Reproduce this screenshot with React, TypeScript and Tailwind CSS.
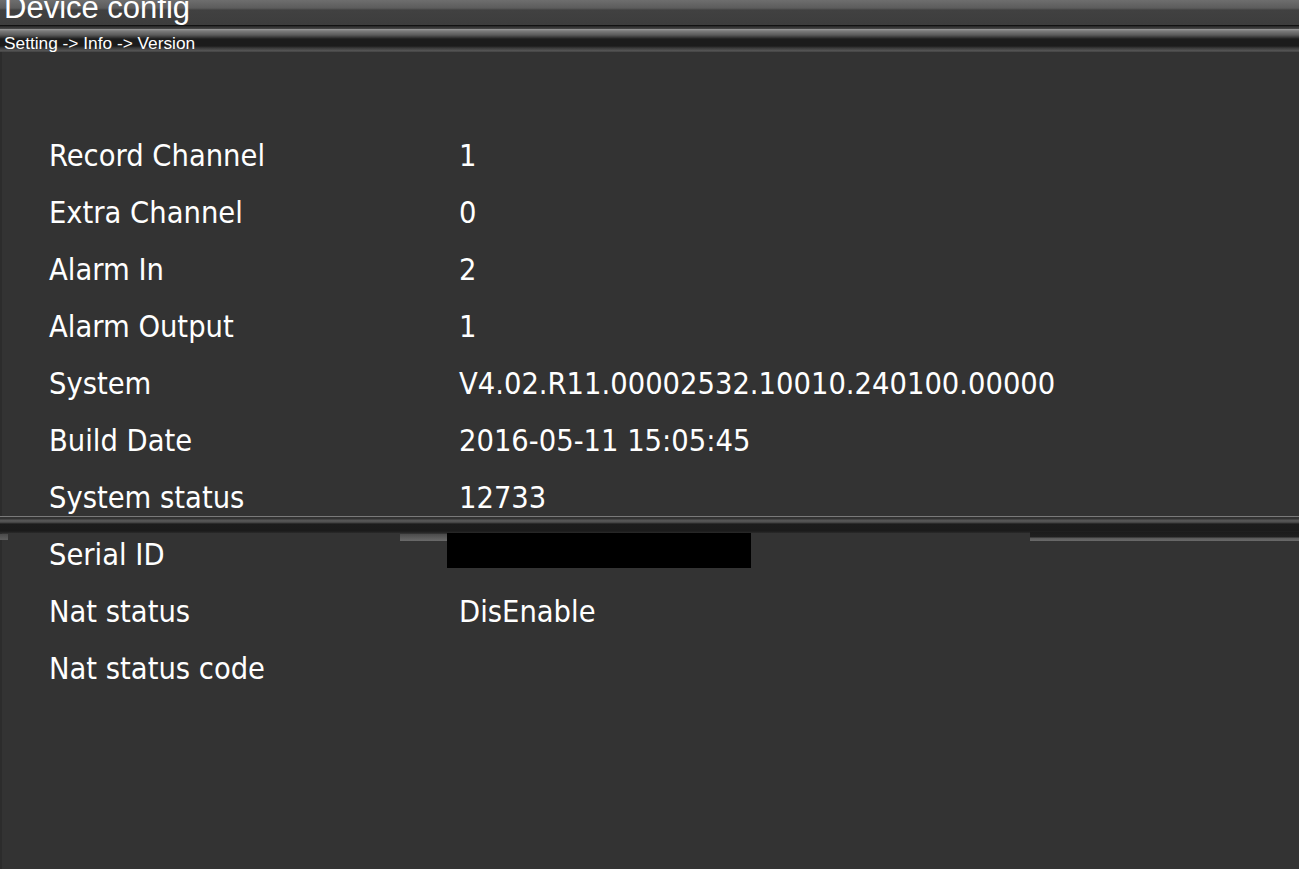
const rows: [string, string][] = [
  ['Record Channel', '1'],
  ['Extra Channel', '0'],
  ['Alarm In', '2'],
  ['Alarm Output', '1'],
  ['System', 'V4.02.R11.00002532.10010.240100.00000'],
  ['Build Date', '2016-05-11 15:05:45'],
  ['System status', '12733'],
  ['Serial ID', ''],
  ['Nat status', 'DisEnable'],
  ['Nat status code', ''],
];

export default function App() {
  return (
    <div className="relative flex h-[869px] w-full flex-col overflow-hidden bg-[#333333] text-white">
      {/* window title */}
      <div className="h-[25px] overflow-hidden bg-[linear-gradient(to_bottom,#6e6e6e,#5c5c5c_8px,#414141_10px,#3d3d3d)]">
        <div className="-mt-[7px] pl-[4px] font-['Liberation_Sans',Arial,sans-serif] text-[31px] leading-[30px]">
          Device config
        </div>
      </div>
      <div className="h-[1px] bg-[#121212]" />
      <div className="h-[3px] bg-[linear-gradient(to_bottom,#242424,#4a4a4a)]" />

      {/* breadcrumb */}
      <div className="h-[23px] overflow-hidden bg-[linear-gradient(to_bottom,#9a9a9a,#7a7a7a_2px,#5a5a5a_6px,#2c2c2c_9px,#1c1c1c_10px,#1c1c1c_17px,#3a3a3a_19px,#575757_22px,#3a3a3a)]">
        <div className="pl-[4px] pt-[3px] font-['Liberation_Sans',Arial,sans-serif] text-[17.3px] leading-[22px]">
          Setting -&gt; Info -&gt; Version
        </div>
      </div>

      {/* info list */}
      <div className="flex-1 border-l-2 border-[#2c2c2c] pt-[75px] pl-[47px] font-['DejaVu_Sans_Condensed','DejaVu_Sans',sans-serif] text-[30.5px]">
        {rows.map(([label, value]) => (
          <div key={label} className="grid h-[57px] grid-cols-[410px_1fr] leading-[57px]">
            <span>{label}</span>
            <span>{value}</span>
          </div>
        ))}
      </div>

      {/* redraw artifact bar */}
      <div className="absolute left-0 right-0 top-[516px] h-[17px] bg-[linear-gradient(to_bottom,#7a7a7a,#7a7a7a_1px,#333333_1px,#333333_3px,#575757_4px,#505050_6px,#3a3a3a_7px,#1c1c1c_8px,#1b1b1b_15px,#2a2a2a_17px)]" />
      <div className="absolute left-[1030px] right-0 top-[532px] h-[9px] bg-[linear-gradient(to_bottom,#1b1b1b,#202020_5px,#5a5a5a_6px,#6a6a6a_9px)]" />
      <div className="absolute left-[400px] top-[534px] h-[7px] w-[47px] bg-[linear-gradient(to_bottom,#4a4a4a,#6a6a6a)]" />
      <div className="absolute left-0 top-[534px] h-[6px] w-[8px] bg-[linear-gradient(to_bottom,#4a4a4a,#5e5e5e)]" />

      {/* redacted serial */}
      <div className="absolute left-[447px] top-[533px] h-[35px] w-[304px] bg-black" />
    </div>
  );
}
